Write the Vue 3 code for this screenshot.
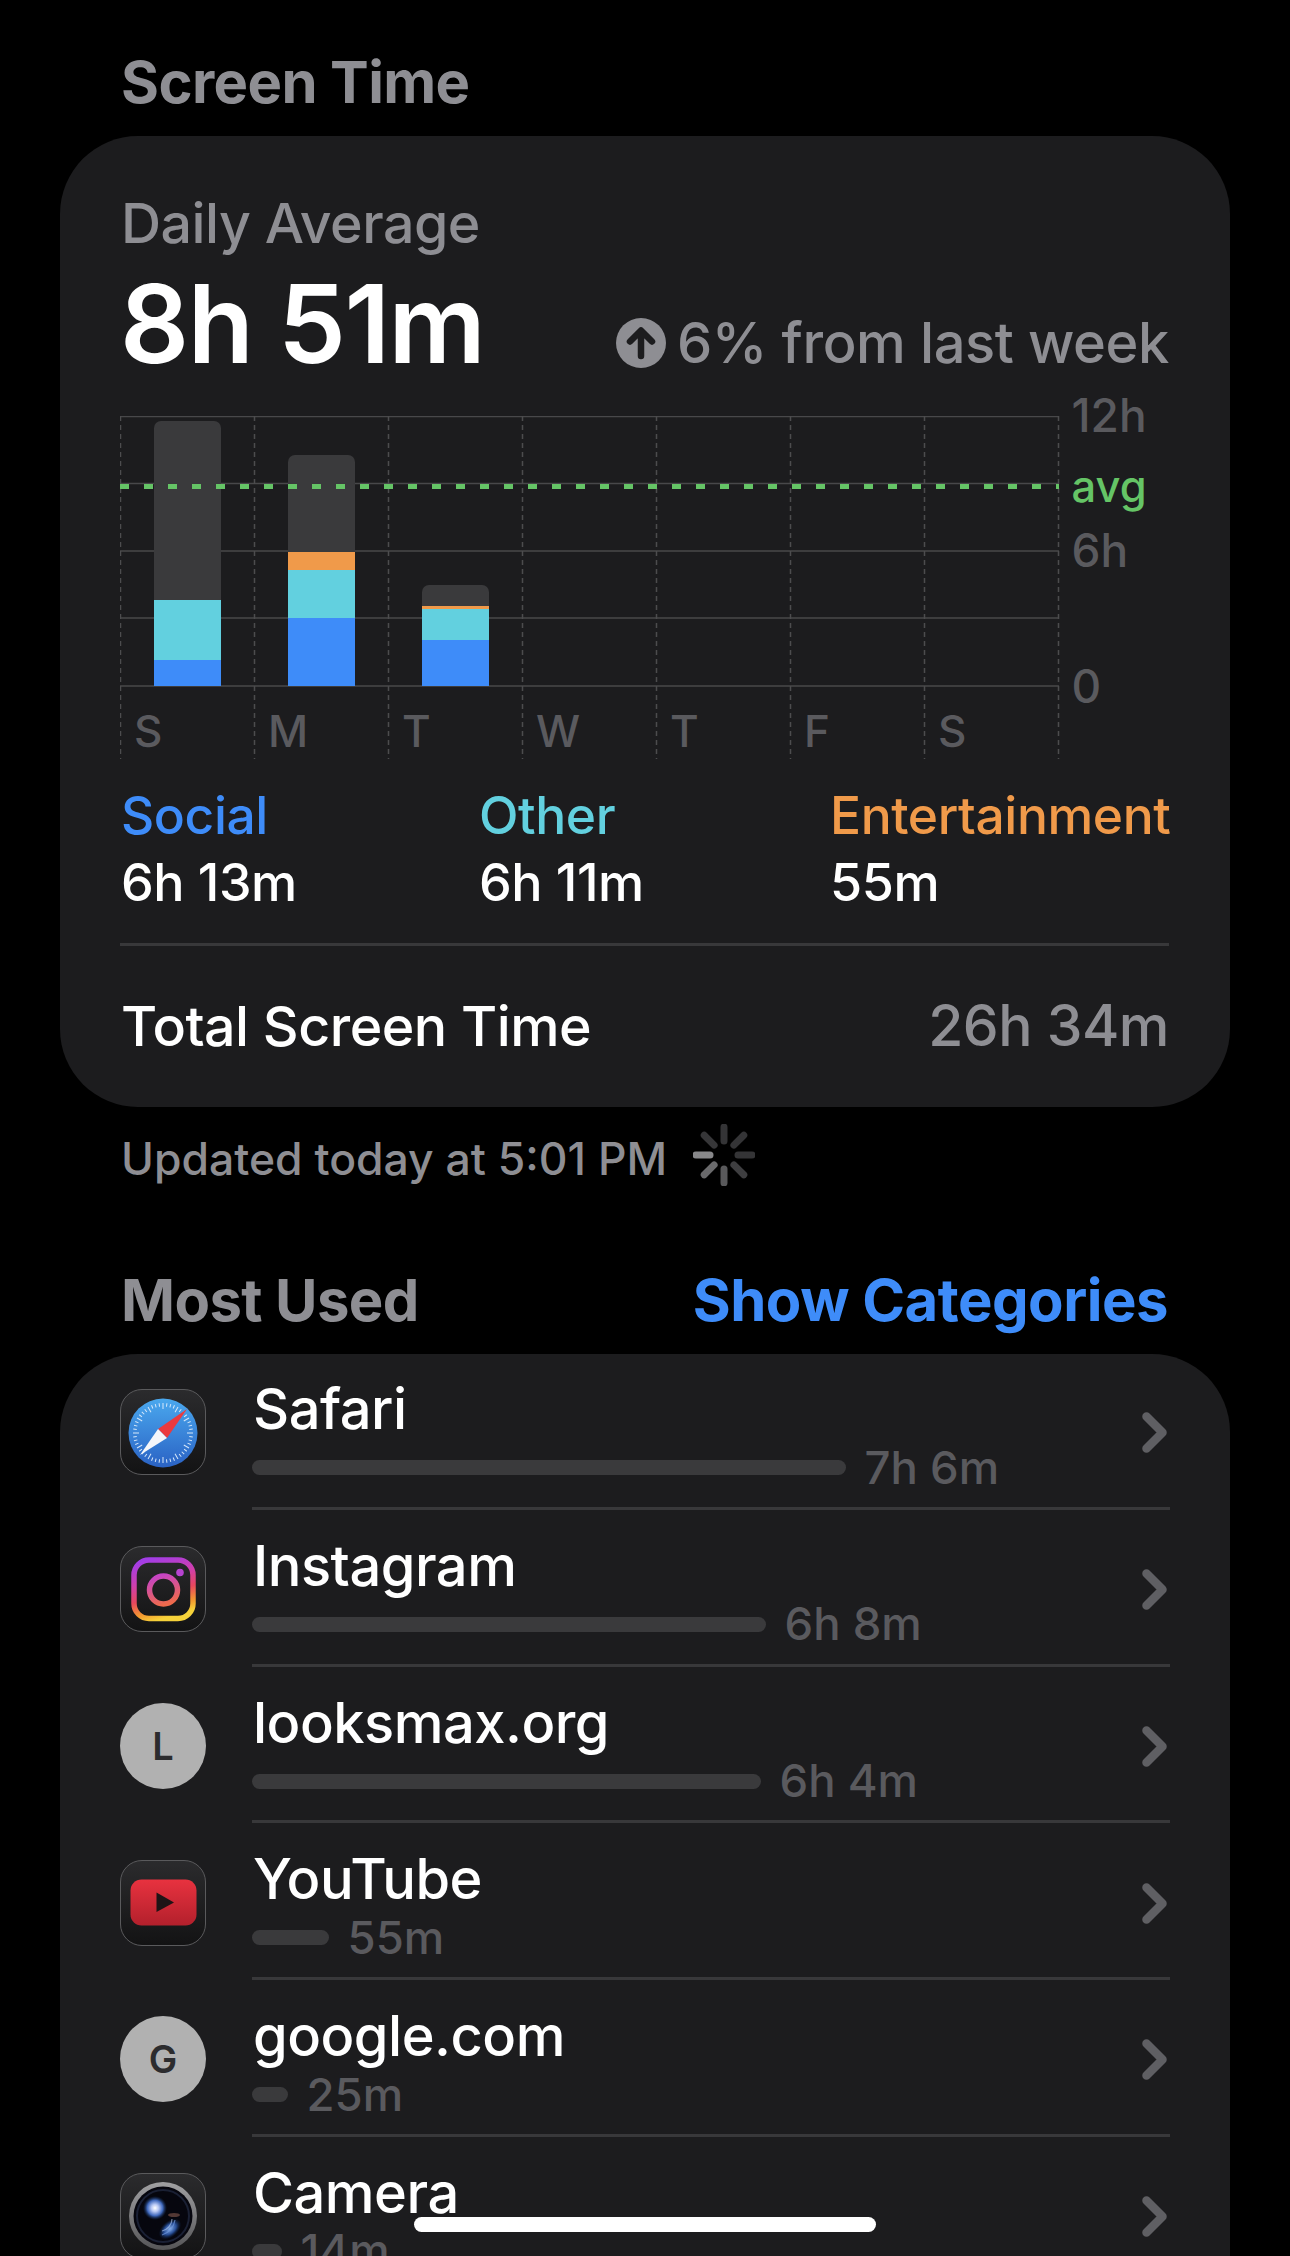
<template>
  <div class="page">
    <h2 class="section-title first">Screen Time</h2>

    <section class="card summary">
      <div class="label">Daily Average</div>
      <div class="headline">
        <div class="big-time">8h 51m</div>
        <div class="trend">
          <svg class="trend-icon" viewBox="0 0 50 50">
            <circle cx="25" cy="25" r="25" fill="#8e8e93" />
            <path d="M25 38V13M14 23.5 25 12.5 36 23.5" fill="none" stroke="#1c1c1e" stroke-width="6.5" stroke-linecap="round" stroke-linejoin="round" />
          </svg>
          <span>6% from last week</span>
        </div>
      </div>

      <div class="chart">
        <div class="plot">
          <svg class="grid" width="940" height="343">
            <line v-for="y in gridY" :key="y" x1="0" x2="939" :y1="y" :y2="y" stroke="#48484a" stroke-width="1.5" />
            <line v-for="x in gridX" :key="x" :x1="x" :x2="x" y1="0" y2="343" stroke="#4c4c4e" stroke-width="1.5" stroke-dasharray="5 4" />
          </svg>
          <div class="days">
            <div v-for="(day, i) in days" :key="i" class="day">
              <div class="bar-zone">
                <div v-if="day.total" class="bar">
                  <div class="seg rest" :style="{ height: day.rest + 'px' }"></div>
                  <div v-if="day.ent" class="seg ent" :style="{ height: day.ent + 'px' }"></div>
                  <div class="seg other" :style="{ height: day.other + 'px' }"></div>
                  <div class="seg social" :style="{ height: day.social + 'px' }"></div>
                </div>
              </div>
              <div class="day-label">{{ day.name }}</div>
            </div>
          </div>
          <div class="avg-line"></div>
        </div>
        <div class="y-axis">
          <span v-for="tick in ticks" :key="tick.text" class="tick" :class="{ avg: tick.text === 'avg' }" :style="{ top: tick.top + 'px' }">{{ tick.text }}</span>
        </div>
      </div>

      <div class="legend">
        <div v-for="item in legend" :key="item.name" class="legend-item" :class="item.cls">
          <div class="legend-name">{{ item.name }}</div>
          <div class="legend-value">{{ item.value }}</div>
        </div>
      </div>

      <div class="total">
        <span>Total Screen Time</span>
        <span class="total-value">26h 34m</span>
      </div>
    </section>

    <div class="updated">
      <span>Updated today at 5:01 PM</span>
      <svg class="spinner" width="62" height="62" viewBox="-31 -31 62 62">
        <line v-for="(c, i) in spokes" :key="i" x1="0" y1="-14" x2="0" y2="-28" :stroke="c" stroke-width="7" stroke-linecap="round" :transform="'rotate(' + i * 45 + ')'" />
      </svg>
    </div>

    <div class="most-head">
      <h2 class="section-title">Most Used</h2>
      <span class="show-cat">Show Categories</span>
    </div>

    <section class="card list">
      <div v-for="app in apps" :key="app.name" class="row">
        <div v-if="app.letter" class="letter-icon">{{ app.letter }}</div>
        <div v-else class="app-icon">
          <svg v-if="app.icon === 'safari'" width="86" height="86" viewBox="0 0 86 86">
            <defs>
              <linearGradient id="safariBlue" x1="0" y1="0" x2="0" y2="1">
                <stop offset="0" stop-color="#4aa8ee" />
                <stop offset="1" stop-color="#2a62c4" />
              </linearGradient>
            </defs>
            <circle cx="43" cy="44" r="34.5" fill="url(#safariBlue)" />
            <line v-for="t in 48" :key="t" x1="43" y1="14" x2="43" :y2="t % 4 === 0 ? 20 : 17.5" stroke="#d6e8fa" stroke-width="1" :transform="'rotate(' + t * 7.5 + ' 43 44)'" />
            <polygon points="67,20 47,49 38,40" fill="#ea3a3f" />
            <polygon points="20,66 47,49 38,40" fill="#f4f6fa" />
          </svg>
          <svg v-else-if="app.icon === 'instagram'" width="86" height="86" viewBox="0 0 86 86">
            <defs>
              <linearGradient id="igGrad" x1="0.2" y1="0" x2="0.5" y2="1">
                <stop offset="0" stop-color="#a23de6" />
                <stop offset="0.35" stop-color="#cf3fae" />
                <stop offset="0.62" stop-color="#e8475e" />
                <stop offset="0.85" stop-color="#f3992f" />
                <stop offset="1" stop-color="#f6d23a" />
              </linearGradient>
              <linearGradient id="igRing" x1="0.3" y1="0" x2="0.6" y2="1">
                <stop offset="0" stop-color="#c644c4" />
                <stop offset="1" stop-color="#ee6a4c" />
              </linearGradient>
            </defs>
            <rect x="14" y="14" width="59" height="58.5" rx="15" fill="none" stroke="url(#igGrad)" stroke-width="5.5" />
            <circle cx="43.5" cy="44" r="14" fill="none" stroke="url(#igRing)" stroke-width="5.5" />
            <circle cx="60" cy="26.5" r="3.8" fill="#b743d0" />
          </svg>
          <svg v-else-if="app.icon === 'youtube'" width="86" height="86" viewBox="0 0 86 86">
            <defs>
              <linearGradient id="ytRed" x1="0" y1="0" x2="0" y2="1">
                <stop offset="0" stop-color="#e8323f" />
                <stop offset="1" stop-color="#b3202c" />
              </linearGradient>
            </defs>
            <rect x="10.5" y="20.5" width="66" height="46" rx="11" fill="url(#ytRed)" />
            <polygon points="36.5,33.5 54,43.5 36.5,53" fill="#1f1416" />
          </svg>
          <svg v-else width="86" height="86" viewBox="0 0 86 86">
            <defs>
              <linearGradient id="camRing" x1="0" y1="0" x2="0" y2="1">
                <stop offset="0" stop-color="#a0a0a2" />
                <stop offset="1" stop-color="#555557" />
              </linearGradient>
              <radialGradient id="camFlare" cx="0.5" cy="0.5" r="0.5">
                <stop offset="0" stop-color="#ffffff" />
                <stop offset="0.3" stop-color="#b8c8f4" />
                <stop offset="0.65" stop-color="#3f68bc" />
                <stop offset="1" stop-color="#123060" stop-opacity="0" />
              </radialGradient>
              <radialGradient id="camGlow" cx="0.5" cy="0.5" r="0.5">
                <stop offset="0" stop-color="#8fb6f0" />
                <stop offset="0.55" stop-color="#2f5fb8" stop-opacity="0.8" />
                <stop offset="1" stop-color="#123060" stop-opacity="0" />
              </radialGradient>
            </defs>
            <circle cx="43" cy="43" r="34" fill="url(#camRing)" />
            <circle cx="43" cy="43" r="29.5" fill="#06060e" />
            <circle cx="43" cy="43" r="26" fill="none" stroke="#1a2034" stroke-width="2" />
            <ellipse cx="35" cy="35" rx="12" ry="12" fill="url(#camFlare)" />
            <ellipse cx="50" cy="56" rx="13" ry="8" fill="url(#camGlow)" transform="rotate(-40 50 56)" />
            <path d="M55 47C54 54 49 60 42 62" fill="none" stroke="#6d96dc" stroke-width="1.2" opacity="0.7" />
            <path d="M52 46C52 52 47 57 42 58" fill="none" stroke="#b4cbf2" stroke-width="1.2" opacity="0.6" />
            <ellipse cx="54" cy="42" rx="6" ry="2" fill="#a06a5a" opacity="0.5" />
          </svg>
        </div>

        <div class="row-main">
          <div class="row-text">
            <div class="app-name">{{ app.name }}</div>
            <div class="usage">
              <div class="usage-bar" :style="{ width: app.bar + 'px' }"></div>
              <span class="usage-time">{{ app.time }}</span>
            </div>
          </div>
          <svg class="chevron" width="25" height="41" viewBox="0 0 25 41">
            <path d="M4.5 4.5 20.5 20.5 4.5 36.5" fill="none" stroke="#5f5f63" stroke-width="8.5" stroke-linecap="round" stroke-linejoin="round" />
          </svg>
        </div>
      </div>
    </section>

    <div class="home-indicator"></div>
  </div>
</template>

<script setup>
// 图表数据，单位都是像素
const gridY = [0.5, 67.5, 135, 202, 270]
const gridX = [0.5, 134.5, 268.5, 402.5, 536.5, 670.5, 804.5, 938.5]

const days = [
  { name: 'S', total: 265, rest: 179, other: 60, social: 26 },
  { name: 'M', total: 231, rest: 97, ent: 18, other: 48, social: 68 },
  { name: 'T', total: 101, rest: 21, ent: 3, other: 31, social: 46 },
  { name: 'W' },
  { name: 'T' },
  { name: 'F' },
  { name: 'S' }
]

const ticks = [
  { text: '12h', top: -26 },
  { text: 'avg', top: 45 },
  { text: '6h', top: 109 },
  { text: '0', top: 245 }
]

const legend = [
  { name: 'Social', value: '6h 13m', cls: 'social-c' },
  { name: 'Other', value: '6h 11m', cls: 'other-c' },
  { name: 'Entertainment', value: '55m', cls: 'ent-c' }
]

// 加载指示器每一根的颜色，从顶部顺时针
const spokes = ['#343436', '#343436', '#343436', '#3e3e40', '#59595b', '#6a6a6c', '#88888a', '#363638']

const apps = [
  { name: 'Safari', icon: 'safari', bar: 594, time: '7h 6m' },
  { name: 'Instagram', icon: 'instagram', bar: 514, time: '6h 8m' },
  { name: 'looksmax.org', letter: 'L', bar: 509, time: '6h 4m' },
  { name: 'YouTube', icon: 'youtube', bar: 77, time: '55m' },
  { name: 'google.com', letter: 'G', bar: 36, time: '25m' },
  { name: 'Camera', icon: 'camera', bar: 30, time: '14m' }
]
</script>

<style>
html,
body {
  margin: 0;
  background: #000;
}
</style>

<style scoped>
.page {
  position: relative;
  width: 1290px;
  height: 2256px;
  overflow: hidden;
  background: #000;
  font-family: Inter, "Liberation Sans", sans-serif;
  color: #fff;
}

.section-title {
  margin: 0;
  font-size: 58px;
  line-height: 60px;
  font-weight: 700;
  color: #8e8e93;
  letter-spacing: -0.6px;
}

.section-title.first {
  padding: 52px 0 0 121px;
  margin-bottom: 24px;
}

.card {
  margin: 0 60px;
  background: #1c1c1e;
  border-radius: 78px;
}

.summary {
  height: 971px;
  box-sizing: border-box;
  padding: 56px 61px 0 60px;
}

.label {
  padding-left: 1px;
  font-size: 55.5px;
  line-height: 62px;
  font-weight: 500;
  color: #8e8e93;
  letter-spacing: -0.5px;
}

.headline {
  display: flex;
  justify-content: space-between;
  align-items: flex-end;
  margin-top: 20px;
  height: 100px;
}

.big-time {
  font-size: 108px;
  line-height: 100px;
  font-weight: 600;
  letter-spacing: -1.5px;
}

.trend {
  display: flex;
  align-items: center;
  gap: 11px;
  font-size: 56px;
  line-height: 62px;
  font-weight: 500;
  color: #8e8e93;
  letter-spacing: -0.4px;
}

.trend-icon {
  width: 50px;
  height: 50px;
}

.chart {
  display: flex;
  margin-top: 42px;
}

.plot {
  position: relative;
  width: 939px;
  height: 343px;
}

.grid {
  position: absolute;
  left: 0;
  top: 0;
}

.days {
  position: relative;
  display: flex;
}

.day {
  width: 134px;
}

.bar-zone {
  height: 270px;
  display: flex;
  align-items: flex-end;
  padding-left: 34px;
}

.bar {
  width: 67px;
  border-radius: 7px 7px 0 0;
  overflow: hidden;
}

.seg.rest {
  background: #3a3a3c;
}

.seg.ent {
  background: #f09a4a;
}

.seg.other {
  background: #62d0df;
}

.seg.social {
  background: #3e8cf9;
}

.day-label {
  padding: 20px 0 0 14px;
  font-size: 44px;
  line-height: 50px;
  font-weight: 500;
  color: #5a5a5e;
}

.avg-line {
  position: absolute;
  left: 0;
  top: 68px;
  width: 939px;
  height: 5px;
  background: repeating-linear-gradient(90deg, #65c466 0 9px, transparent 9px 24px);
}

.y-axis {
  position: relative;
  flex: 1;
}

.tick {
  position: absolute;
  left: 12.5px;
  font-size: 46px;
  line-height: 50px;
  font-weight: 500;
  color: #5a5a5e;
}

.tick.avg {
  font-size: 43.5px;
  color: #65c466;
}

.legend {
  display: flex;
  margin-top: 26px;
  padding-left: 1px;
}

.legend-item {
  flex: none;
}

.legend-item:nth-child(1) {
  width: 358px;
}

.legend-item:nth-child(2) {
  width: 351px;
}

.legend-name {
  font-size: 51.5px;
  line-height: 60px;
  font-weight: 500;
  letter-spacing: -0.4px;
}

.legend-value {
  margin-top: 8px;
  font-size: 52px;
  line-height: 60px;
  font-weight: 500;
  color: #fff;
  letter-spacing: -0.4px;
}

.social-c .legend-name {
  color: #3e8cf9;
}

.other-c .legend-name {
  color: #62d0df;
}

.ent-c .legend-name {
  color: #f09a4a;
}

.total {
  display: flex;
  justify-content: space-between;
  align-items: center;
  height: 159px;
  margin-top: 30px;
  padding: 0 0 0 1px;
  border-top: 3px solid #38383a;
  font-size: 55.5px;
  font-weight: 500;
  letter-spacing: -0.5px;
}

.total-value {
  font-size: 57px;
  color: #8e8e93;
}

.updated {
  display: flex;
  align-items: center;
  gap: 26px;
  height: 76px;
  margin-top: 14px;
  padding-left: 121px;
  font-size: 44.5px;
  font-weight: 500;
  color: #8e8e93;
}

.spinner {
  margin-top: -8px;
}

.most-head {
  display: flex;
  justify-content: space-between;
  align-items: center;
  margin-top: 73px;
  padding: 0 122px 0 121px;
  height: 60px;
}

.show-cat {
  font-size: 58px;
  line-height: 60px;
  font-weight: 700;
  color: #3e8cf9;
  letter-spacing: -0.5px;
}

.list {
  margin-top: 24px;
  height: 1000px;
  padding: 0 60px;
}

.row {
  position: relative;
  top: -1px;
  display: flex;
  align-items: center;
  height: 156.75px;
}

.app-icon {
  flex: none;
  width: 86px;
  height: 86px;
  box-sizing: border-box;
  margin-top: 2px;
  border: 1.5px solid #5a5a5c;
  border-radius: 22px;
  background: linear-gradient(#2b2b2d, #131314);
  overflow: hidden;
}

.app-icon svg {
  display: block;
  margin: -1.5px;
}

.letter-icon {
  flex: none;
  display: flex;
  align-items: center;
  justify-content: center;
  width: 86px;
  height: 86px;
  margin-top: 2px;
  border-radius: 50%;
  background: #b1b1b1;
  color: #2c2c2e;
  font-size: 38px;
  font-weight: 600;
}

.row-main {
  flex: 1;
  display: flex;
  align-items: center;
  justify-content: space-between;
  align-self: stretch;
  margin-left: 46px;
  border-bottom: 3px solid #38383a;
}

.row-text {
  flex: 1;
  align-self: flex-start;
  padding-top: 26px;
}

.app-name {
  padding-left: 1px;
  font-size: 56px;
  line-height: 60px;
  font-weight: 500;
  letter-spacing: -0.5px;
}

.usage {
  display: flex;
  align-items: center;
  gap: 18.5px;
  height: 50px;
  margin-top: 3.5px;
}

.usage-bar {
  height: 15px;
  border-radius: 8px;
  background: #3a3a3c;
}

.usage-time {
  font-size: 45.5px;
  line-height: 50px;
  font-weight: 500;
  color: #5a5a5e;
}

.chevron {
  margin: 6px 3px 0 0;
}

.home-indicator {
  position: absolute;
  left: 414px;
  top: 2217px;
  width: 462px;
  height: 15px;
  border-radius: 8px;
  background: #fff;
}
</style>
